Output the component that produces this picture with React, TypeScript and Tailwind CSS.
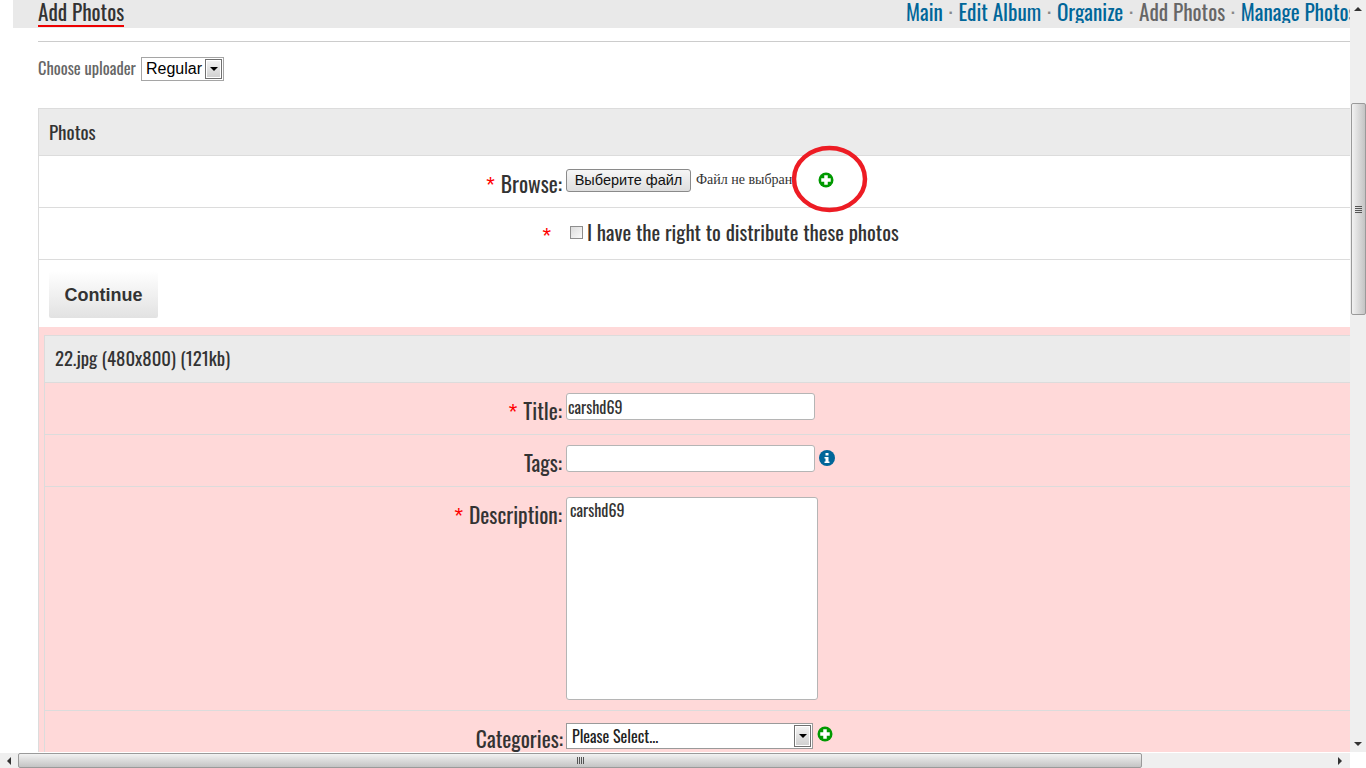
import type { ReactNode } from "react";

const NAV = [
  { label: "Main", link: true },
  { label: "Edit Album", link: true },
  { label: "Organize", link: true },
  { label: "Add Photos", link: false },
  { label: "Manage Photos", link: true },
];

const oswald = "font-['Oswald','Open_Sans',sans-serif]";

function PlusIcon() {
  return (
    <svg width="16" height="16" viewBox="0 0 16 16" className="block">
      <circle cx="8" cy="8" r="7.5" fill="#009900" />
      <path d="M6.25 3.25h3.5v3h3v3.5h-3v3h-3.5v-3h-3v-3.5h3z" fill="#fff" />
    </svg>
  );
}

function InfoIcon() {
  return (
    <svg width="16" height="16" viewBox="0 0 16 16" className="block">
      <circle cx="8" cy="8" r="8" fill="#006699" />
      <rect x="6.5" y="3" width="3" height="2.5" fill="#fff" />
      <path d="M5.5 7h4v4.5h1V13h-5v-1.5h1v-3h-1z" fill="#fff" />
    </svg>
  );
}

function DropArrow() {
  return (
    <span className="flex h-full w-[17px] items-center justify-center border border-[#707070] bg-gradient-to-b from-[#f4f4f4] to-[#cfcfcf] shadow-[inset_0_0_0_1px_#fff]">
      <span className="h-0 w-0 border-x-[4px] border-t-[4px] border-x-transparent border-t-black" />
    </span>
  );
}

function Star() {
  return <span className="font-['Liberation_Sans',sans-serif] text-[22px] leading-none text-[#ff0000]">*</span>;
}

function Row({
  label,
  required,
  height,
  labelWidth,
  labelPt,
  children,
  pt = "pt-[10px]",
}: {
  label: ReactNode;
  required?: boolean;
  height: string;
  labelWidth: string;
  labelPt: string;
  children: ReactNode;
  pt?: string;
}) {
  return (
    <div className={`flex border-b border-[#dcdcdc] ${height}`}>
      <div className={`flex shrink-0 items-start justify-end gap-[6px] pr-[4px] ${labelWidth} ${labelPt}`}>
        {required && <span className="mt-[6px]"><Star /></span>}
        <span className={`${oswald} text-[21.5px] leading-[30px] text-[#333]`}>{label}</span>
      </div>
      <div className={`flex min-w-0 flex-1 items-start ${pt}`}>{children}</div>
    </div>
  );
}

export default function App() {
  return (
    <div className="flex h-[768px] w-[1366px] flex-col overflow-hidden bg-white">
      <div className="flex min-h-0 flex-1">
        {/* Page */}
        <div className="relative min-w-0 flex-1 overflow-hidden pl-[13px]">
          <div className="flex h-[28px] items-start justify-between bg-[#e9e9e9] pl-[25px]">
            <h1 className={`${oswald} h-[27px] border-b-2 border-[#ee0000] text-[21.2px] leading-[23px] text-[#333]`}>
              Add Photos
            </h1>
            <nav className={`${oswald} flex w-[444px] shrink-0 gap-[6px] overflow-hidden whitespace-nowrap text-[21.2px] leading-[23px]`}>
              {NAV.map((item, i) => (
                <span key={item.label} className="flex gap-[6px]">
                  {i > 0 && <span className="text-[#888]">·</span>}
                  <span className={item.link ? "text-[#006699]" : "text-[#666]"}>{item.label}</span>
                </span>
              ))}
            </nav>
          </div>

          <div className="pl-[25px]">
            <div className="mt-[13px] border-t border-[#cccccc]" />

            <div className="mt-[15px] flex h-[24px] items-center gap-[5px]">
              <span className={`${oswald} mt-[-2px] w-[98px] whitespace-nowrap text-[16.4px] leading-[22px] text-[#666]`}>Choose uploader</span>
              <div className="flex h-[24px] w-[83px] items-center justify-between border border-[#a5a5a5] p-[1px] pl-[4px] font-['Liberation_Sans',sans-serif] text-[16px] text-black">
                Regular
                <DropArrow />
              </div>
            </div>

            {/* Photos panel */}
            <div className="mt-[27px] border-l border-t border-[#dcdcdc]">
              <div className={`${oswald} flex h-[47px] items-center border-b border-[#dcdcdc] bg-[#ebebeb] pb-[2px] pl-[10px] text-[19px] text-[#333]`}>
                Photos
              </div>

              <Row label="Browse:" required height="h-[52px]" labelWidth="w-[527px]" labelPt="pt-[12px]" pt="pt-[13px]">
                <button className="h-[23px] w-[125px] rounded-[3px] border border-[#8a8a8a] bg-gradient-to-b from-[#f6f6f6] to-[#dedede] font-['Liberation_Sans',sans-serif] text-[14.5px] leading-none text-[#111]">
                  Выберите файл
                </button>
                <span className="ml-[5px] mt-[3px] w-[97px] overflow-hidden whitespace-nowrap font-['Liberation_Serif',serif] text-[14px] leading-[16px] text-[#333]">
                  Файл не выбран
                </span>
                <span className="ml-[25px] mt-[3px]">
                  <PlusIcon />
                </span>
              </Row>

              <Row label={<span className="inline-block w-[5px]" />} required height="h-[52px]" labelWidth="w-[527px]" labelPt="pt-[11px]">
                <span className="ml-[4px] mt-[8px] h-[13px] w-[13px] border border-[#8e8e8e] bg-gradient-to-br from-[#dcdcdc] to-[#fafafa]" />
                <span className={`${oswald} ml-[4px] mt-[-1px] whitespace-nowrap text-[20.7px] leading-[30px] text-[#333]`}>
                  I have the right to distribute these photos
                </span>
              </Row>

              <div className="flex h-[67px] items-start pl-[10px] pt-[11px]">
                <button className="h-[47px] w-[109px] rounded-[2px] bg-gradient-to-b from-[#ffffff] to-[#e2e2e2] pt-[2px] font-['Liberation_Sans',sans-serif] text-[18px] font-bold text-[#333]">
                  Continue
                </button>
              </div>

              {/* Upload form */}
              <div className="h-[600px] bg-[#ffd9d9] pl-[5px] pt-[8px]">
                <div className="border-l border-t border-[#dcdcdc]">
                  <div className={`${oswald} flex h-[47px] items-center border-b border-[#dcdcdc] bg-[#ebebeb] pb-[2px] pl-[10px] text-[18.7px] text-[#333]`}>
                    22.jpg (480x800) (121kb)
                  </div>

                  <Row label="Title:" required height="h-[52px]" labelWidth="w-[521px]" labelPt="pt-[12px]">
                    <div className={`${oswald} flex h-[27px] w-[249px] items-center rounded-[3px] border border-[#b5b5b5] bg-white pl-[1px] text-[16px] text-[#333]`}>
                      carshd69
                    </div>
                  </Row>

                  <Row label="Tags:" height="h-[52px]" labelWidth="w-[521px]" labelPt="pt-[12px]">
                    <div className="h-[27px] w-[249px] rounded-[3px] border border-[#b5b5b5] bg-white" />
                    <span className="ml-[4px] mt-[5px]">
                      <InfoIcon />
                    </span>
                  </Row>

                  <Row label="Description:" required height="h-[224px]" labelWidth="w-[521px]" labelPt="pt-[12px]">
                    <div className={`${oswald} h-[203px] w-[252px] rounded-[3px] border border-[#b5b5b5] bg-white pl-[3px] text-[16px] leading-[24px] text-[#333]`}>
                      carshd69
                    </div>
                  </Row>

                  <div className="flex">
                    <div className="flex w-[521px] shrink-0 justify-end pr-[3px] pt-[12px]">
                      <span className={`${oswald} text-[21.5px] leading-[30px] text-[#333]`}>Categories:</span>
                    </div>
                    <div className="flex items-start pt-[12px]">
                      <div className={`${oswald} flex h-[26px] w-[247px] items-center justify-between border border-[#9a9a9a] bg-white p-[1px] pl-[5px] text-[16px] text-[#222]`}>
                        Please Select...
                        <DropArrow />
                      </div>
                      <span className="ml-[4px] mt-[3px]">
                        <PlusIcon />
                      </span>
                    </div>
                  </div>
                </div>
              </div>
            </div>
          </div>

          {/* Hand-drawn annotation over the screenshot */}
          <svg width="80" height="70" viewBox="0 0 80 70" className="absolute left-[789px] top-[144px]">
            <ellipse cx="40.5" cy="35" rx="35.5" ry="31" fill="none" stroke="#ed1c24" strokeWidth="4.5" />
          </svg>
        </div>

        {/* Vertical scrollbar */}
        <div className="flex w-[16px] shrink-0 flex-col bg-[#efefef]">
          <div className="flex h-[17px] items-center justify-center">
            <span className="h-0 w-0 border-x-[4px] border-b-[4px] border-x-transparent border-b-[#333]" />
          </div>
          <div className="ml-[1px] mt-[86px] flex h-[212px] w-[15px] flex-col items-center justify-center gap-[1px] rounded-[2px] border border-[#9a9a9a] bg-gradient-to-r from-[#f2f2f2] to-[#c4c4c4]">
            <span className="h-[1px] w-[7px] bg-[#555]" />
            <span className="h-[1px] w-[7px] bg-[#555]" />
            <span className="h-[1px] w-[7px] bg-[#555]" />
            <span className="h-[1px] w-[7px] bg-[#555]" />
          </div>
          <div className="mt-auto flex h-[17px] items-center justify-center">
            <span className="h-0 w-0 border-x-[4px] border-t-[4px] border-x-transparent border-t-[#333]" />
          </div>
        </div>
      </div>

      {/* Horizontal scrollbar */}
      <div className="flex h-[16px] shrink-0 border-t border-white">
        <div className="flex w-[1350px] items-stretch bg-[#efefef]">
          <div className="flex w-[18px] shrink-0 items-center justify-center">
            <span className="h-0 w-0 border-y-[4px] border-r-[4px] border-y-transparent border-r-[#333]" />
          </div>
          <div className="flex w-[1124px] items-center justify-center gap-[1px] rounded-[2px] border border-[#9a9a9a] bg-gradient-to-b from-[#f2f2f2] to-[#c4c4c4]">
            <span className="h-[7px] w-[1px] bg-[#555]" />
            <span className="h-[7px] w-[1px] bg-[#555]" />
            <span className="h-[7px] w-[1px] bg-[#555]" />
            <span className="h-[7px] w-[1px] bg-[#555]" />
          </div>
          <div className="ml-auto flex w-[20px] shrink-0 items-center justify-center">
            <span className="h-0 w-0 border-y-[4px] border-l-[4px] border-y-transparent border-l-[#333]" />
          </div>
        </div>
      </div>
    </div>
  );
}
